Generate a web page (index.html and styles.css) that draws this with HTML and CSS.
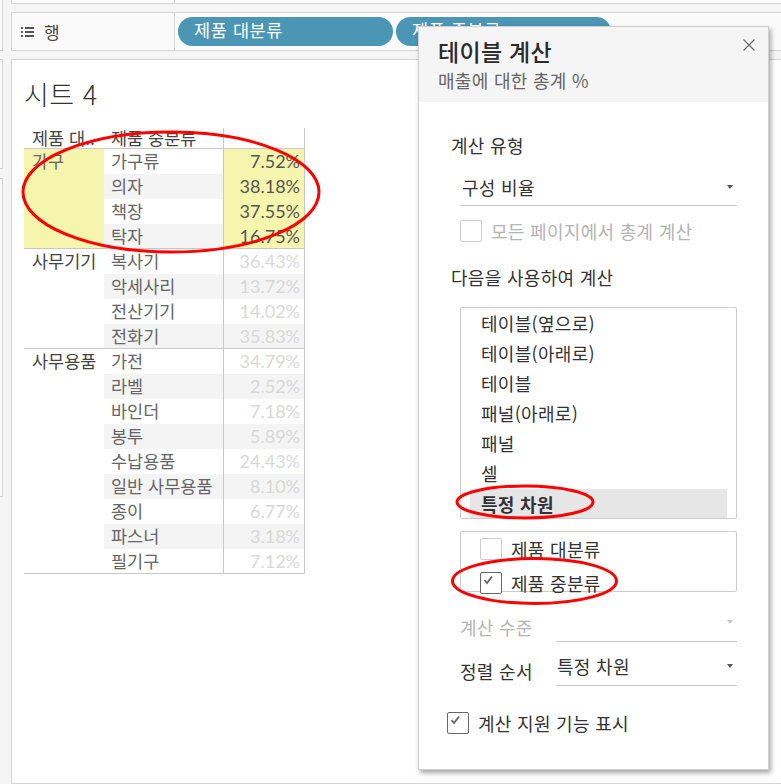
FILE: index.html
```html
<!DOCTYPE html>
<html lang="ko">
<head>
<meta charset="utf-8">
<title>테이블 계산</title>
<link rel="stylesheet" href="styles.css">
</head>
<body>
<div class="page">
  <div class="rail">
    <div class="rail-panel rp1"></div>
    <div class="rail-panel rp2"></div>
    <div class="rail-panel rp3"></div>
  </div>
  <div class="main">
    <div class="shelf shelf-top"><div class="shelf-label"></div><div class="shelf-pills"></div></div>
    <div class="shelf shelf-rows">
      <div class="shelf-label">
        <svg class="rows-icon" width="13" height="10" viewBox="0 0 13 10"><path d="M0 1h2M0 5h2M0 9h2M4 1h9M4 5h9M4 9h9" stroke="#555" stroke-width="2" fill="none"/></svg>
        <span>행</span>
      </div>
      <div class="shelf-pills">
        <div class="pill">제품 대분류</div>
        <div class="pill">제품 중분류</div>
      </div>
    </div>
    <div class="sheet">
      <h1 class="sheet-title">시트 4</h1>
      <div class="crosstab">
        <div class="head h1">제품 대..</div>
        <div class="head h2">제품 중분류</div>
        <div class="head h3"></div>

        <div class="group sel">
          <div class="g-name">가구</div>
          <div class="g-rows">
            <div class="row"><div class="sub">가구류</div><div class="val">7.52%</div></div>
            <div class="row alt"><div class="sub">의자</div><div class="val">38.18%</div></div>
            <div class="row"><div class="sub">책장</div><div class="val">37.55%</div></div>
            <div class="row alt"><div class="sub">탁자</div><div class="val">16.75%</div></div>
          </div>
        </div>
        <div class="group">
          <div class="g-name">사무기기</div>
          <div class="g-rows">
            <div class="row"><div class="sub">복사기</div><div class="val">36.43%</div></div>
            <div class="row alt"><div class="sub">악세사리</div><div class="val">13.72%</div></div>
            <div class="row"><div class="sub">전산기기</div><div class="val">14.02%</div></div>
            <div class="row alt"><div class="sub">전화기</div><div class="val">35.83%</div></div>
          </div>
        </div>
        <div class="group">
          <div class="g-name">사무용품</div>
          <div class="g-rows">
            <div class="row"><div class="sub">가전</div><div class="val">34.79%</div></div>
            <div class="row alt"><div class="sub">라벨</div><div class="val">2.52%</div></div>
            <div class="row"><div class="sub">바인더</div><div class="val">7.18%</div></div>
            <div class="row alt"><div class="sub">봉투</div><div class="val">5.89%</div></div>
            <div class="row"><div class="sub">수납용품</div><div class="val">24.43%</div></div>
            <div class="row alt"><div class="sub">일반 사무용품</div><div class="val">8.10%</div></div>
            <div class="row"><div class="sub">종이</div><div class="val">6.77%</div></div>
            <div class="row alt"><div class="sub">파스너</div><div class="val">3.18%</div></div>
            <div class="row"><div class="sub">필기구</div><div class="val">7.12%</div></div>
          </div>
        </div>
      </div>
    </div>
  </div>

  <div class="dialog">
    <div class="d-head">
      <div class="d-title">테이블 계산</div>
      <div class="d-sub">매출에 대한 총계 %</div>
      <svg class="d-close" width="12" height="12" viewBox="0 0 12 12"><path d="M.5.5l11 11M11.5.5l-11 11" stroke="#666" stroke-width="1.1" fill="none"/></svg>
    </div>
    <div class="d-body">
      <div class="label l-type">계산 유형</div>
      <div class="select s-type"><span>구성 비율</span><i class="caret"></i></div>
      <div class="check-line c-all"><span class="box box-off"></span><span class="muted">모든 페이지에서 총계 계산</span></div>
      <div class="label l-using">다음을 사용하여 계산</div>
      <div class="listbox">
        <div class="li">테이블(옆으로)</div>
        <div class="li">테이블(아래로)</div>
        <div class="li">테이블</div>
        <div class="li">패널(아래로)</div>
        <div class="li">패널</div>
        <div class="li">셀</div>
        <div class="li li-on">특정 차원</div>
      </div>
      <div class="dimbox">
        <div class="check-line"><span class="box"></span><span>제품 대분류</span></div>
        <div class="check-line"><span class="box box-dark"><svg width="13" height="11" viewBox="0 0 13 11"><path d="M1.5 5l2.5 3L9 1.5" stroke="#666" stroke-width="1.8" fill="none"/></svg></span><span>제품 중분류</span></div>
      </div>
      <div class="field f-level"><span class="f-label muted">계산 수준</span><div class="select s-small"><span></span><i class="caret caret-off"></i></div></div>
      <div class="field f-sort"><span class="f-label">정렬 순서</span><div class="select s-small"><span>특정 차원</span><i class="caret"></i></div></div>
      <div class="check-line c-assist"><span class="box box-dark"><svg width="13" height="11" viewBox="0 0 13 11"><path d="M1.5 5l2.5 3L9 1.5" stroke="#666" stroke-width="1.8" fill="none"/></svg></span><span>계산 지원 기능 표시</span></div>
    </div>
  </div>

  <svg class="marks" width="781" height="784" viewBox="0 0 781 784">
    <ellipse cx="171" cy="192" rx="148" ry="60" fill="none" stroke="#f00" stroke-width="3"/>
    <ellipse cx="525" cy="502" rx="68" ry="16" fill="none" stroke="#f00" stroke-width="3"/>
    <ellipse cx="534.500" cy="581" rx="82" ry="22.500" fill="none" stroke="#f00" stroke-width="3"/>
  </svg>
</div>
</body>
</html>
```

FILE: styles.css
```css
* { box-sizing: border-box; }
html, body { margin: 0; padding: 0; }
body {
  width: 781px;
  height: 784px;
  overflow: hidden;
  background: #f5f5f5;
  font-family: "Noto Sans CJK KR", "Noto Sans", sans-serif;
  color: #333;
}
.page { position: relative; width: 781px; height: 784px; display: flex; overflow: hidden; }

.rail { width: 11px; flex: none; display: flex; flex-direction: column; }
.rail-panel { width: 3px; background: #fafafa; border-right: 1px solid #d4d4d4; border-bottom: 1px solid #d4d4d4; }
.rp1 { height: 51px; }
.rp2 { height: 110px; margin-top: 8px; border-top: 1px solid #d4d4d4; }
.rp3 { height: 319px; margin-top: 9px; border-top: 1px solid #d4d4d4; }

.main { flex: 1; display: flex; flex-direction: column; min-width: 0; }
.shelf { display: flex; background: #fafafa; border: 1px solid #d4d4d4; border-right: 0; flex: none; }
.shelf-top { height: 4px; border-top: 0; }
.shelf-rows { height: 39px; margin-top: 8px; }
.shelf-label {
  width: 163px;
  flex: none;
  border-right: 1px solid #d4d4d4;
  display: flex;
  align-items: center;
  padding-left: 9px;
  gap: 10px;
  font-size: 17px;
  color: #444;
}
.rows-icon { flex: none; }
.shelf-pills { display: flex; gap: 3px; padding: 4px 0 0 3px; }
.pill {
  width: 215px;
  height: 29px;
  border-radius: 14.5px;
  background: #4b96b4;
  color: #fff;
  font-size: 17.500px;
  line-height: 25px;
  padding-left: 16px;
  letter-spacing: 0.6px;
}

.sheet { margin-top: 8px; flex: 1; background: #fff; border: 1px solid #d4d4d4; border-right: 0; padding: 0 0 0 12px; }
.sheet-title {
  margin: 0;
  height: 68px;
  padding-top: 14px;
  font-size: 27px;
  line-height: 40px;
  font-weight: 300;
  color: #333;
  letter-spacing: 0.5px;
}
.crosstab { width: 281px; display: grid; grid-template-columns: 80px 120px 81px; font-size: 17.500px; }
.head { height: 21px; line-height: 19px; padding-left: 8px; color: #444; border-bottom: 1px solid #c8c8c8; white-space: nowrap; overflow: hidden; }
.h2 { padding-left: 7px; }
.h3 { border-left: 1px solid #c8c8c8; border-right: 1px solid #c8c8c8; margin-left: -1px; }
.group { grid-column: 1 / -1; display: grid; grid-template-columns: 80px 201px; border-bottom: 1px solid #c8c8c8; }
.g-name { padding-left: 8px; line-height: 23px; color: #444; white-space: nowrap; }
.g-rows { display: flex; flex-direction: column; }
.row { height: 25px; display: grid; grid-template-columns: 120px 81px; line-height: 24px; }
.group .row:last-child { height: 24px; }
.sub { padding-left: 7px; color: #666; white-space: nowrap; overflow: hidden; }
.val {
  font-family: "Lato", "Liberation Sans", sans-serif;
  font-size: 18px;
  text-align: right;
  padding-right: 4px;
  color: #d9d9d9;
  border-left: 1px solid #c8c8c8;
  border-right: 1px solid #c8c8c8;
  margin-left: -1px;
}
.alt { background: #f4f4f4; }
.sel .g-name { background: #f5f5ad; color: #666; }
.sel .val { background: #f5f5ad; color: #555; }

.dialog {
  position: absolute;
  left: 418px;
  top: 26px;
  width: 351px;
  height: 744px;
  background: #fff;
  border: 1px solid #cfcfcf;
  box-shadow: 2px 3px 5px rgba(0, 0, 0, 0.35);
}
.d-head { position: relative; height: 75px; background: #f5f5f5; padding: 8px 0 0 19px; }
.d-title { font-size: 23px; line-height: 32px; font-weight: 500; color: #2b2b2b; letter-spacing: 0.3px; }
.d-sub { font-size: 18px; line-height: 26px; color: #666; letter-spacing: 0.3px; }
.d-close { position: absolute; top: 12px; right: 13px; }
.d-body { padding: 29px 31px 0 41px; font-size: 18px; color: #333; }
.label { margin-left: -9px; line-height: 28px; height: 28px; letter-spacing: 0.3px; }
.select {
  display: flex;
  align-items: center;
  justify-content: space-between;
  border-bottom: 1px solid #c8c8c8;
  letter-spacing: 0.3px;
}
.s-type { margin-top: 14px; height: 33px; padding: 0 4px 4px 2px; }
.caret { width: 0; height: 0; border-left: 3.500px solid transparent; border-right: 3.500px solid transparent; border-top: 4px solid #555; }
.caret-off { border-top-color: #c8c8c8; }
.check-line { display: flex; align-items: center; gap: 9px; letter-spacing: 0.3px; }
.box {
  width: 22px;
  height: 22px;
  flex: none;
  border: 1px solid #ccc;
  border-radius: 2px;
  background: #fff;
  display: flex;
  padding: 2px 0 0 2px;
}
.box-dark { border-color: #666; }
.muted { color: #b4b4b4; }
.c-all { margin-top: 13px; height: 24px; }
.l-using { margin-top: 20px; }
.listbox {
  margin-top: 16px;
  height: 212px;
  border: 1px solid #ccc;
  border-radius: 2px;
  padding: 1px 9px 0;
  overflow: hidden;
}
.li { height: 30px; line-height: 28px; padding-left: 11px; letter-spacing: 0.3px; }
.li-on { background: #e6e6e6; font-weight: 700; height: 31px; line-height: 30px; }
.dimbox { margin-top: 12px; height: 61px; border: 1px solid #ccc; border-radius: 2px; padding: 4px 0 0 19px; display: flex; flex-direction: column; gap: 8px; }
.field { display: flex; align-items: flex-end; }
.f-label { width: 96px; flex: none; padding-bottom: 2px; letter-spacing: 0.3px; }
.s-small { flex: 1; height: 36px; padding: 0 4px 4px 1px; }
.f-level { margin-top: 14px; }
.f-sort { margin-top: 8px; }
.c-assist { margin: 26px 0 0 -13px; height: 22px; }

.marks { position: absolute; left: 0; top: 0; pointer-events: none; }
```
